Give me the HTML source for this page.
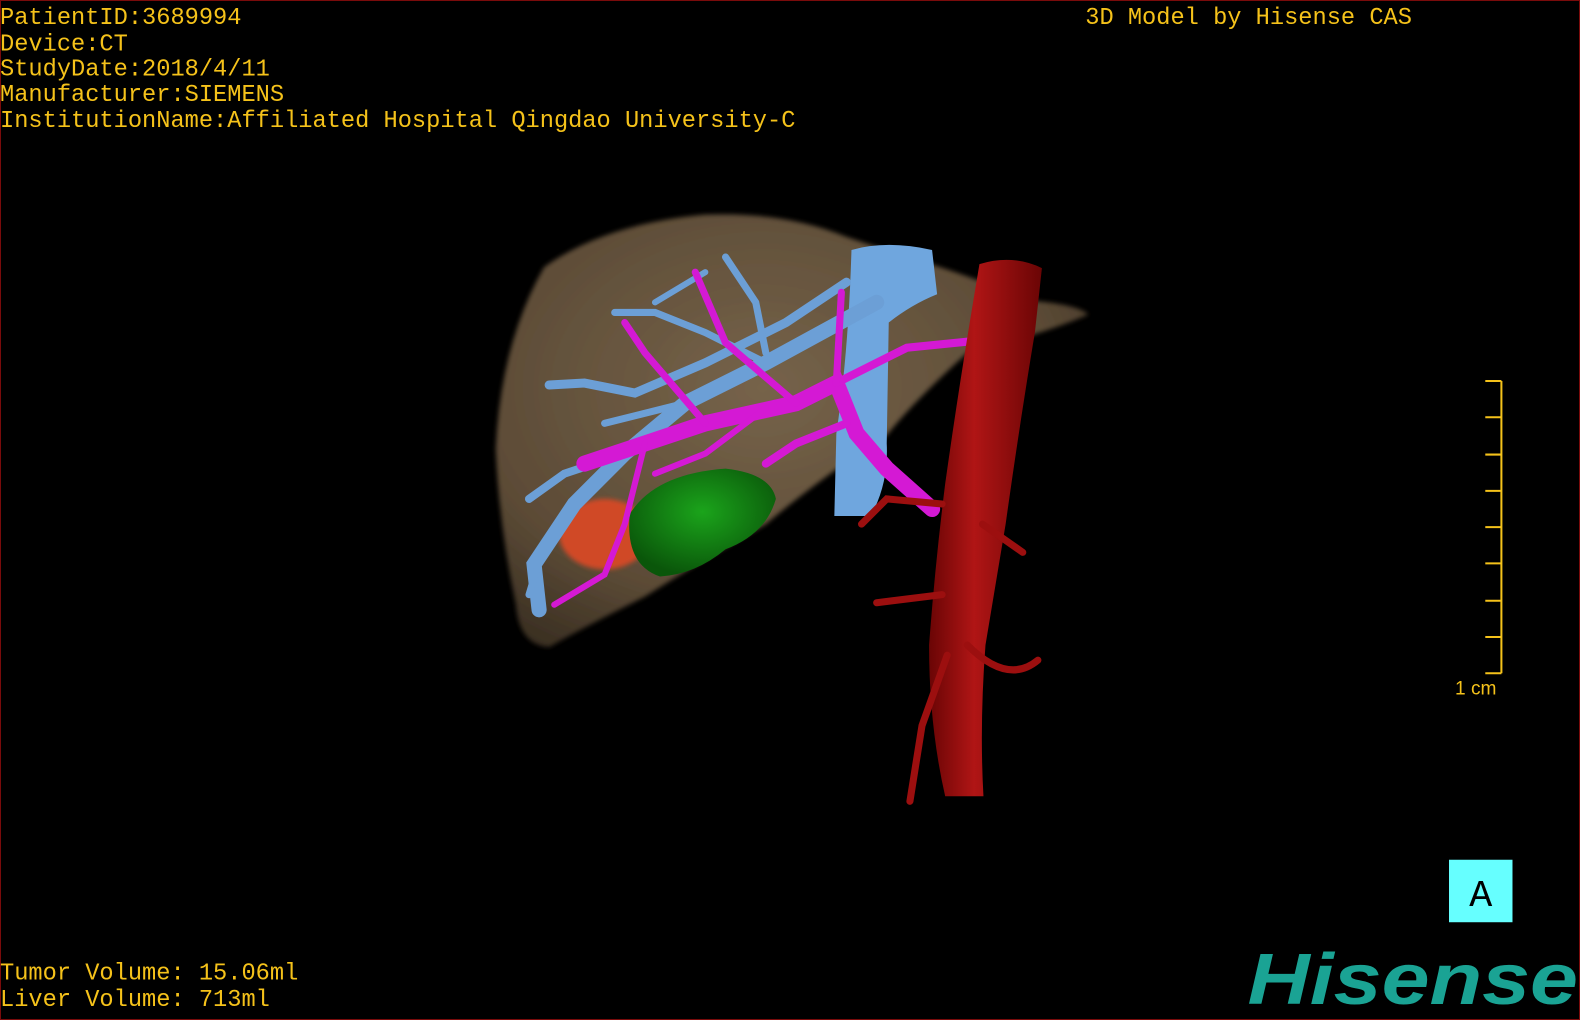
<!DOCTYPE html>
<html><head><meta charset="utf-8"><style>
html,body{margin:0;padding:0;background:#000;width:1580px;height:1020px;overflow:hidden}
svg{display:block}
</style></head><body>
<svg width="1580" height="1020" viewBox="0 0 1568 1012" preserveAspectRatio="none" xmlns="http://www.w3.org/2000/svg">
<defs>
<filter id="b" x="-20%" y="-20%" width="140%" height="140%"><feGaussianBlur stdDeviation="2.5"/></filter>
<radialGradient id="liv" cx="0.45" cy="0.4" r="0.7"><stop offset="0" stop-color="#76634a"/><stop offset="0.7" stop-color="#5c4b36"/><stop offset="1" stop-color="#3a2f22"/></radialGradient>
<radialGradient id="grn" cx="0.5" cy="0.4" r="0.6"><stop offset="0" stop-color="#1ba41b"/><stop offset="1" stop-color="#0a560a"/></radialGradient>
<linearGradient id="red" x1="0" x2="1"><stop offset="0" stop-color="#6a0505"/><stop offset="0.4" stop-color="#b01515"/><stop offset="1" stop-color="#6a0505"/></linearGradient>
</defs>
<rect x="0" y="0" width="1568" height="1012" fill="#000" stroke="#7a0b0b" stroke-width="2"/>
<path d="M540 265 Q600 222 700 213 Q780 210 840 235 L900 255 Q960 272 1020 298 Q1070 302 1080 312 Q1040 330 960 350 Q905 400 880 432 Q820 470 760 520 Q690 560 640 592 Q580 622 545 642 Q515 640 512 600 Q495 520 492 445 Q497 340 540 265Z" fill="url(#liv)" filter="url(#b)"/>
<ellipse cx="600" cy="530" rx="45" ry="35" fill="#d04a28" filter="url(#b)"/>
<path d="M625 510 Q650 470 720 465 Q765 470 770 495 Q760 530 720 545 Q690 570 655 572 Q620 560 625 510Z" fill="url(#grn)"/>
<path d="M845 248 Q880 238 925 248 L930 292 Q905 302 882 320 L880 440 Q882 480 864 512 L828 512 L830 430 Q842 350 845 248Z" fill="#6fa6de"/>
<g stroke="#6c9fd6" stroke-linecap="round" fill="none">
<path d="M870 300 L760 360 L680 400 L620 450 L570 500 L530 560 L535 605" stroke-width="15"/>
<path d="M840 280 L780 320 L700 360 L630 390 L580 380 L545 382" stroke-width="9"/>
<path d="M760 360 L700 330 L650 310 L610 310" stroke-width="7"/>
<path d="M720 255 L750 300 L760 350" stroke-width="7"/>
<path d="M650 300 L700 270" stroke-width="6"/>
<path d="M620 450 L560 470 L525 495" stroke-width="8"/>
<path d="M680 400 L600 420" stroke-width="7"/>
<path d="M570 500 L540 540 L525 590" stroke-width="7"/>
</g>
<g stroke="#d419d4" stroke-linecap="round" fill="none">
<path d="M925 505 L880 465 L850 430 L830 380 L790 400 L700 420 L640 440 L580 460" stroke-width="16"/>
<path d="M830 380 L900 345 L1000 335" stroke-width="8"/>
<path d="M830 380 L835 290" stroke-width="7"/>
<path d="M790 400 L720 340 L690 270" stroke-width="7"/>
<path d="M700 420 L640 350 L620 320" stroke-width="7"/>
<path d="M640 440 L620 520 L600 570 L550 600" stroke-width="6"/>
<path d="M760 405 L700 450 L650 470" stroke-width="6"/>
<path d="M840 420 L790 440 L760 460" stroke-width="8"/>
</g>
<path d="M972 262 Q1005 252 1034 266 L1027 330 Q1012 420 998 520 L978 640 Q972 720 976 790 L938 790 Q922 720 922 640 Q928 560 938 480 Q952 380 972 262Z" fill="url(#red)"/>
<g stroke="#9c0f0f" stroke-linecap="round" fill="none" stroke-width="7">
<path d="M960 640 Q1000 680 1030 655"/>
<path d="M935 590 L870 598"/>
<path d="M940 650 L915 720 L903 795"/>
<path d="M975 520 L1015 548"/>
<path d="M935 500 L880 495 L855 520"/>
</g>
<g font-family="Liberation Mono, monospace" font-size="23.5" fill="#f5c21a">
<text x="0" y="24">PatientID:3689994</text>
<text x="0" y="50">Device:CT</text>
<text x="0" y="75">StudyDate:2018/4/11</text>
<text x="0" y="100">Manufacturer:SIEMENS</text>
<text x="0" y="126">InstitutionName:Affiliated Hospital Qingdao University-C</text>
<text x="1077" y="24">3D Model by Hisense CAS</text>
<text x="0" y="972">Tumor Volume: 15.06ml</text>
<text x="0" y="998">Liver Volume: 713ml</text>
</g>
<g stroke="#f5c21a" stroke-width="2" fill="none">
<path d="M1490 378 V668"/>
<path d="M1474 378H1490M1474 414H1490M1474 451H1490M1474 487H1490M1474 523H1490M1474 559H1490M1474 596H1490M1474 632H1490M1474 668H1490"/>
</g>
<text x="1444" y="689" font-family="Liberation Sans, sans-serif" font-size="19" fill="#f5c21a">1 cm</text>
<rect x="1438" y="853" width="63" height="62" fill="#66ffff"/>
<text x="1469.5" y="899" text-anchor="middle" font-family="Liberation Mono, monospace" font-size="38" fill="#000">A</text>
<text x="1238" y="996" font-family="Liberation Sans, sans-serif" font-weight="bold" font-style="italic" font-size="72" fill="#1aa394" textLength="328" lengthAdjust="spacingAndGlyphs">Hisense</text>
</svg>
</body></html>
